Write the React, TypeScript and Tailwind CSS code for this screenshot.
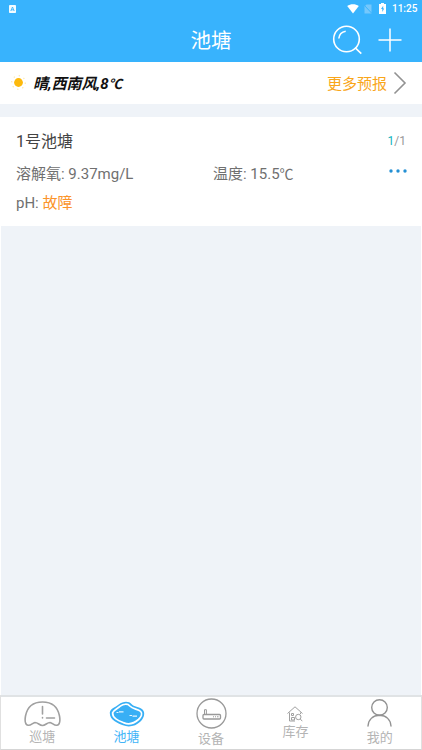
import React from "react";

function StatusBar() {
  return (
    <div className="flex h-[18px] items-center pl-[9px] pr-[5px]">
      <svg className="h-[8px] w-[7px]" viewBox="0 0 7 8">
        <rect width="7" height="8" rx="0.8" fill="#f3fbff" />
        <path d="M1.8 6 L3.5 2 L5.2 6 M2.4 4.8 H4.6" fill="none" stroke="#38b3fd" strokeWidth="0.9" />
      </svg>
      <div className="flex-1" />
      <svg className="mr-[5px] -mt-px h-[10px] w-[12px]" viewBox="0 0 12 10">
        <path d="M0.2 2 C3.5 -0.5 8.5 -0.5 11.8 2 L6 9.4 Z" fill="#fff" />
      </svg>
      <svg className="mr-[7px] -mt-px h-[10px] w-[8px]" viewBox="0 0 8 10">
        <path d="M2.5 0.5 H7.5 V9.5 H0.5 V2.5 Z" fill="#75c8fc" />
        <path d="M0.5 1.5 L7.5 9" stroke="#38b3fd" strokeWidth="1" />
      </svg>
      <svg className="mr-[6px] -mt-px h-[11px] w-[7px]" viewBox="0 0 7 11">
        <path d="M2 0 H5 V1 H7 V11 H0 V1 H2 Z" fill="#fff" />
        <path d="M4.2 2.7 L2 6 H3.3 V9 L5.2 5.4 H4.2 Z" fill="#38b3fd" />
      </svg>
      <span className="w-[25px] whitespace-nowrap text-[10px] font-medium leading-[18px] text-white">11:25</span>
    </div>
  );
}

function Header() {
  return (
    <header className="h-[62px] bg-[#38b3fd]">
      <StatusBar />
      <div className="grid h-[44px] grid-cols-3 items-center">
        <span />
        <h1 className="pt-px text-center text-[20.5px] leading-[42px] text-white">池塘</h1>
        <div className="flex items-center justify-end pr-[20px]">
          <svg className="mr-[16px] h-[30px] w-[30px]" viewBox="0 0 30 30" fill="none" stroke="#fff" strokeWidth="1.6">
            <circle cx="14.5" cy="14" r="12.8" />
            <path d="M6.8 13.5 A8.3 8.3 0 0 1 13.7 6.3 M23 22.7 L29.3 28.7" />
          </svg>
          <svg className="h-[24px] w-[24px]" viewBox="0 0 24 24" stroke="#fff" strokeWidth="1.5">
            <path d="M12 0.5 V23.5 M0.5 12 H23.5" />
          </svg>
        </div>
      </div>
    </header>
  );
}

function Weather() {
  return (
    <section className="flex h-[42px] items-center bg-white pl-[10px] pr-[15px]">
      <svg className="-mt-px h-[18px] w-[18px]" viewBox="0 0 18 18">
        <circle cx="8.5" cy="8.5" r="4.4" fill="#fdb90b" />
        <circle cx="8.5" cy="8.5" r="6.8" fill="none" stroke="#fde8ad" strokeWidth="1.3" strokeDasharray="1.3 4.04" />
      </svg>
      <span className="ml-[5px] whitespace-nowrap pt-px text-[15px] font-bold italic leading-[22px] text-[#111]">
        晴,西南风,8<span className="text-[13.5px]">℃</span>
      </span>
      <div className="flex-1" />
      <span className="pt-px text-[15px] leading-[22px] text-[#f9a61a]">更多预报</span>
      <svg className="ml-[6px] h-[24px] w-[14px]" viewBox="0 0 14 24" fill="none" stroke="#929292" strokeWidth="1.6">
        <path d="M1.5 1.5 L12 12 L1.5 22.5" />
      </svg>
    </section>
  );
}

function PondCard() {
  return (
    <section className="mt-[13px] h-[109px] bg-white px-[16px] pt-[12px] text-[#707070]">
      <div className="flex h-[24px] items-center justify-between">
        <h2 className="pt-px text-[16px] leading-[24px] text-[#444]">1号池塘</h2>
        <span className="text-[12px] text-[#999]"><span className="text-[#14b4bc]">1</span>/1</span>
      </div>
      <div className="mt-[9px] flex h-[24px] items-center text-[15px]">
        <span className="w-[197px] pt-px">溶解氧: 9.37mg/L</span>
        <span className="flex-1 pt-px">温度: 15.5<span className="text-[14px]">℃</span></span>
        <svg className="-mt-[6px] -mr-[1px] h-[4px] w-[18px]" viewBox="0 0 18 4" fill="#2490d4">
          <circle cx="2" cy="2" r="1.7" />
          <circle cx="9" cy="2" r="1.7" />
          <circle cx="16" cy="2" r="1.7" />
        </svg>
      </div>
      <div className="mt-[5px] h-[24px] text-[15px] leading-[24px]">
        pH: <span className="text-[#fb942a]">故障</span>
      </div>
    </section>
  );
}

function PatrolIcon() {
  return (
    <svg className="h-[26px] w-[37px]" viewBox="0 0 37 26" fill="none" stroke="#a0a0a0" strokeWidth="1.6" strokeLinecap="round" strokeLinejoin="round">
      <path d="M4 24.2 C1 23.5 0.8 19 1.5 15 C3.2 6 9.5 1 18.5 1 C27.5 1 33.8 6 35.5 15 C36.2 19 36 23.5 33 24.2 C30.5 25 28.5 22 26 21.5 C23 21.5 21.5 24.5 18.5 24.5 C15.5 24.5 14 21.5 11 21.5 C8.5 22 6.5 25 4 24.2 Z" />
      <path d="M18.5 5.5 V13 M18.5 16.5 V17 M22.5 17 H30.5" />
    </svg>
  );
}

function PondIcon() {
  return (
    <svg className="h-[26px] w-[36px]" viewBox="0 0 36 26">
      <path d="M0.8 11.5 C1.8 7 6 6.5 9.7 3.5 C14 -0.2 20 -0.2 22.5 3 C25 6 30 5.5 33.5 8.5 C37 12 34.5 17.5 31.5 20.5 C27 25 20 26.8 14 24.3 C8.5 21.8 0.5 19 0.8 11.5 Z" fill="#38aff5" />
      <path d="M3.6 11.8 C4.3 9 8 8 11.3 5.2 C14.5 2.7 18.8 2.5 20.8 5 C23.8 8.3 28.8 7.8 31.7 10.5 C34 13 32 16.2 29.5 18.5 C25.5 22 20 23.9 15 21.9 C9.8 19.7 3.3 17.3 3.6 11.8 Z" fill="none" stroke="#fff" strokeWidth="1.7" />
      <path d="M7.5 11.5 H9.5 M10 10.8 H14.5 M20.5 14.5 H23 M23.5 15.2 H28" stroke="#e6f6ff" strokeWidth="1.2" />
    </svg>
  );
}

function DeviceIcon() {
  return (
    <svg className="h-[31px] w-[31px]" viewBox="0 0 31 31" fill="none" stroke="#999" strokeWidth="1.3">
      <circle cx="15.5" cy="15.5" r="14.5" />
      <rect x="7" y="16.5" width="17.5" height="4.5" rx="1" />
      <path d="M8.5 16 V11.7 H10.4 V16 M17 18.8 H18 M19 18.8 H20 M21 18.8 H22.5" strokeWidth="1" />
    </svg>
  );
}

function StockIcon() {
  return (
    <svg className="h-[16px] w-[16px]" viewBox="0 0 16 16" fill="none" stroke="#a0a0a0" strokeWidth="1">
      <path d="M0.5 7.5 L8 0.8 L15.5 7.5 M2.5 6.5 V15 H8 M13.5 6.5 V8" />
      <path d="M4.5 7.5 H6.5 V9.5 H4.5 Z M4.5 11.5 H7.5 V14 H4.5 Z" />
      <circle cx="11.3" cy="11" r="2.7" />
      <path d="M13.3 13 L15.3 15.2" />
    </svg>
  );
}

function ProfileIcon() {
  return (
    <svg className="h-[28px] w-[25px]" viewBox="0 0 25 28" fill="none" stroke="#929292" strokeWidth="1.4" strokeLinecap="round">
      <circle cx="12.5" cy="8.5" r="7.8" />
      <path d="M1 27 C1.5 20.5 6 16.5 12.5 16.3 C19 16.5 23.5 20.5 24 27" />
    </svg>
  );
}

function TabBar() {
  const item = "flex flex-1 flex-col items-center text-[13px] leading-[18px] text-[#b4b4b4]";
  return (
    <nav className="flex h-[55px] border-x border-b border-t-2 border-x-[#e0e0e0] border-b-[#d5d5d5] border-t-[#e0e3e5] bg-white">
      <div className={item + " pt-[4px] pr-[2px]"}><PatrolIcon /><span className="mt-px">巡塘</span></div>
      <div className={item + " pt-[4px] pr-[2px]"}><PondIcon /><span className="mt-px text-[#42b4f7]">池塘</span></div>
      <div className={item + " pt-[1px] pr-[2px]"}><DeviceIcon /><span className="mt-px">设备</span></div>
      <div className={item + " pt-[9px] pr-[2px]"}><StockIcon /><span className="mt-px">库存</span></div>
      <div className={item + " pt-[2px]"}><ProfileIcon /><span className="mt-[2px]">我的</span></div>
    </nav>
  );
}

export default function App() {
  return (
    <div className="flex h-[750px] w-[422px] flex-col overflow-hidden bg-[#eff3f8] font-['Roboto','Noto_Sans_CJK_SC',sans-serif]">
      <Header />
      <Weather />
      <PondCard />
      <main className="flex-1 border-x border-white" />
      <TabBar />
    </div>
  );
}
